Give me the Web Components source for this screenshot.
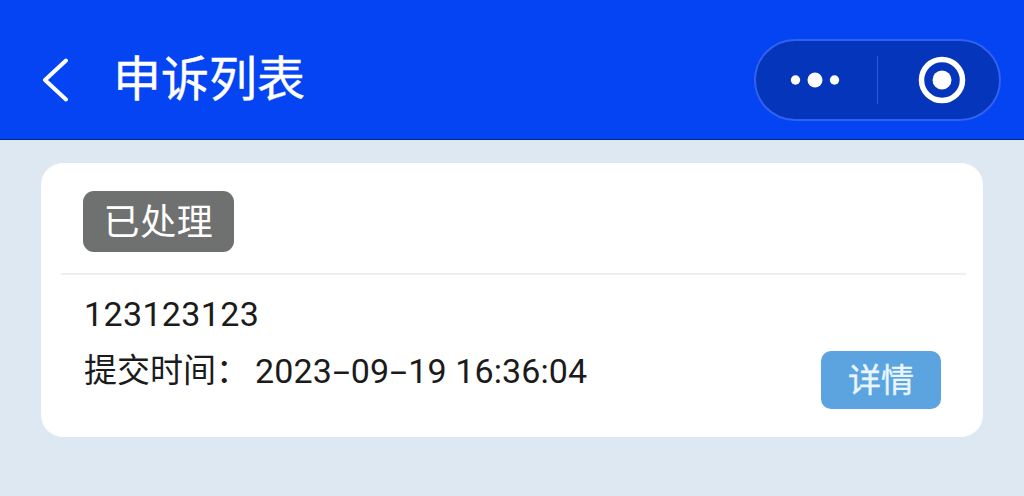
<!DOCTYPE html>
<html lang="zh">
<head>
<meta charset="utf-8">
<title>申诉列表</title>
<style>
  html,body{margin:0;height:100%;overflow:hidden;background:#dde8f2}
  body{font-family:"Roboto","Noto Sans CJK SC",sans-serif}
</style>
</head>
<body>
<nav-bar titulo="申诉列表"></nav-bar>
<lista-apelaciones>
  <tarjeta-apelacion estado="已处理" texto="123123123" fecha="2023-09-19 16:36:04"></tarjeta-apelacion>
</lista-apelaciones>

<script>
class CapsulaMenu extends HTMLElement{
  constructor(){ super(); this.attachShadow({mode:"open"}); }
  connectedCallback(){
    this.shadowRoot.innerHTML = `
      <style>
        :host{
          display:flex;
          align-items:center;
          box-sizing:border-box;
          width:247px;
          height:82px;
          border-radius:41px;
          background:#0535ba;
          border:2px solid #2f62ef;
        }
        .mitad{flex:1;display:flex;align-items:center;justify-content:center}
        .mitad svg{display:block}
        .puntos{margin-right:3px}
        .diana{margin-left:6px}
        .sep{width:1px;height:48px;background:#2a58dc}
      </style>
      <div class="mitad">
        <svg class="puntos" width="50" height="16" viewBox="0 0 50 16" fill="#fff">
          <circle cx="5.5" cy="8" r="4.7"/><circle cx="25" cy="8" r="7.5"/><circle cx="44.5" cy="8" r="4.7"/>
        </svg>
      </div>
      <div class="sep"></div>
      <div class="mitad">
        <svg class="diana" width="48" height="48" viewBox="0 0 48 48">
          <circle cx="24" cy="24" r="20.5" fill="none" stroke="#fff" stroke-width="5.5"/>
          <circle cx="24" cy="24" r="9.5" fill="#fff"/>
        </svg>
      </div>`;
  }
}
customElements.define("capsula-menu", CapsulaMenu);

class NavBar extends HTMLElement{
  constructor(){ super(); this.attachShadow({mode:"open"}); }
  connectedCallback(){
    this.shadowRoot.innerHTML = `
      <style>
        :host{
          display:flex;
          align-items:center;
          box-sizing:border-box;
          height:140px;
          padding:20px 23px 0 41px;
          background:#0444f2;
          border-bottom:1px solid #06288c;
          color:#fff;
        }
        svg{display:block;flex:none}
        h1{
          margin:0 0 0 43px;
          flex:1;
          font-weight:400;
          font-size:48px;
          line-height:60px;
          -webkit-text-stroke:.4px #fff;
        }
      </style>
      <svg width="29" height="44" viewBox="0 0 29 44" fill="none" stroke="#fff" stroke-width="4" stroke-linecap="round" stroke-linejoin="round">
        <path d="M25 2.500 4 22l21 19.500"/>
      </svg>
      <h1>${this.getAttribute("titulo")||""}</h1>
      <capsula-menu></capsula-menu>`;
  }
}
customElements.define("nav-bar", NavBar);

class ListaApelaciones extends HTMLElement{
  constructor(){ super(); this.attachShadow({mode:"open"}); }
  connectedCallback(){
    this.shadowRoot.innerHTML = `
      <style>
        :host{display:block;padding:23px 41px 0}
      </style>
      <slot></slot>`;
  }
}
customElements.define("lista-apelaciones", ListaApelaciones);

class TarjetaApelacion extends HTMLElement{
  constructor(){ super(); this.attachShadow({mode:"open"}); }
  connectedCallback(){
    const a = n => this.getAttribute(n)||"";
    // el guion de la fecha es mas ancho en la captura
    const fecha = a("fecha").replace(/-/g,'<i class="guion">-</i>');
    this.shadowRoot.innerHTML = `
      <style>
        :host{
          display:block;
          height:274px;
          background:#fff;
          border-radius:22px;
          padding:0 17px 0 20px;
          color:#1b1b1b;
        }
        .cabecera{
          height:112px;
          box-sizing:border-box;
          padding:28px 0 0 22px;
          border-bottom:2px solid #eeeff0;
        }
        .estado{
          display:inline-flex;
          align-items:center;
          justify-content:center;
          width:151px;
          height:61px;
          box-sizing:border-box;
          padding-bottom:5px;
          border-radius:11px;
          background:#6f7170;
          color:#fff;
          font-size:36px;
          letter-spacing:.6px;
        }
        .cuerpo{
          display:flex;
          justify-content:space-between;
          align-items:flex-end;
          padding:0 25px 0 23px;
        }
        .linea{font-size:33px;line-height:40px;white-space:nowrap}
        .texto{margin-top:19px;font-size:34px;letter-spacing:.35px}
        .fecha{margin-top:17px;display:flex}
        .fecha b{font-weight:400;font-size:34px;margin-left:6px;letter-spacing:.1px}
        .guion{
          display:inline-block;
          width:19px;
          text-align:center;
          font-style:normal;
          transform:scaleX(1.8);
        }
        .detalle{
          display:inline-flex;
          align-items:center;
          justify-content:center;
          width:120px;
          height:58px;
          margin-bottom:-18px;
          border:0;
          padding:0 0 4px;
          border-radius:10px;
          background:#5ba4e0;
          color:#e9f5ff;
          font:inherit;
          font-size:33px;
          -webkit-text-stroke:.4px #e9f5ff;
        }
      </style>
      <div class="cabecera"><span class="estado">${a("estado")}</span></div>
      <div class="cuerpo">
        <div>
          <div class="linea texto">${a("texto")}</div>
          <div class="linea fecha">提交时间：<b>${fecha}</b></div>
        </div>
        <button class="detalle">详情</button>
      </div>`;
  }
}
customElements.define("tarjeta-apelacion", TarjetaApelacion);
</script>
</body>
</html>
